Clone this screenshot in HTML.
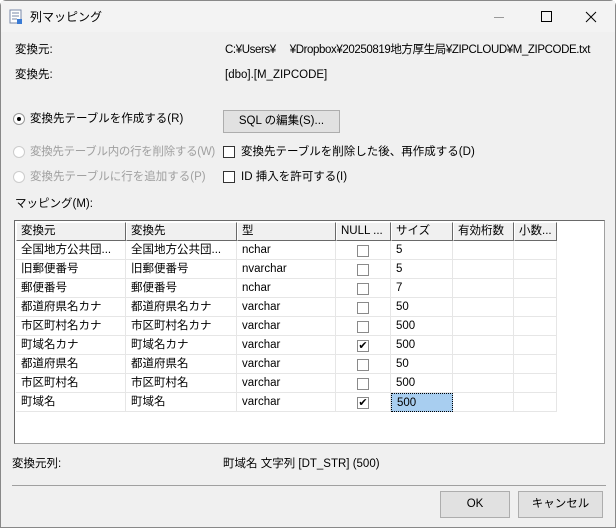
<!DOCTYPE html><html><head><meta charset="utf-8"><style>
*{margin:0;padding:0;box-sizing:border-box}
body{width:616px;height:528px;background:#fff;font-family:"Liberation Sans","Noto Sans CJK JP",sans-serif;font-size:11.5px;color:#000;position:relative;overflow:hidden}
.win{position:absolute;left:0;top:0;width:616px;height:528px;background:#f0f0f0;border:1px solid #888;border-radius:6px 6px 0 0}
.tb{position:absolute;left:0;top:0;width:614px;height:31px;background:#f3f3f3}
.a{position:absolute;white-space:nowrap;line-height:14px}
.g{color:#a0a0a0}
.btn{position:absolute;background:#e1e1e1;border:1px solid #adadad;text-align:center}
.cb{position:absolute;width:12px;height:12px;border:1px solid #333;background:#fff}
.rd{position:absolute;width:12px;height:12px;border-radius:50%;border:1px solid #999;background:#fff}
.grid{position:absolute;left:13px;top:219px;width:591px;height:224px;background:#fff;border:1px solid #a0a0a0;border-top-color:#696969;border-left-color:#696969}
.h{position:absolute;top:1px;height:19px;background:#f0f0f0;border:1px solid;border-color:#fff #696969 #696969 #fff;padding-left:4px;line-height:17px;white-space:nowrap;overflow:hidden}
.c{position:absolute;height:19px;border-right:1px solid #e6e6e6;border-bottom:1px solid #e6e6e6;padding-left:5px;line-height:18px;overflow:hidden;white-space:nowrap}
.ck{position:absolute;width:12px;height:12px;border:1px solid #8a8a8a;background:#fff;font-size:11px;line-height:10px;text-align:center}
</style></head><body><div class="win">
<div class="tb"></div>
<svg style="position:absolute;left:8px;top:8px" width="14" height="16"><rect x="1" y="1" width="11" height="13" fill="#fff" stroke="#7a8aa8"/><path d="M3 4h7M3 7h7M3 10h5" stroke="#7a8aa8"/><rect x="8" y="10" width="5" height="5" fill="#3a7bd5"/></svg>
<div class="a" style="left:29px;top:9px;font-size:12px">列マッピング</div>
<div style="position:absolute;left:493px;top:16px;width:10px;height:1px;background:#999"></div>
<div style="position:absolute;left:540px;top:10px;width:11px;height:11px;border:1px solid #000"></div>
<svg style="position:absolute;left:584px;top:10px" width="12" height="12"><path d="M1 1L11 11M11 1L1 11" stroke="#000" stroke-width="1"/></svg>
<div class="a" style="left:14px;top:42px">変換元:</div>
<div class="a" style="left:224px;top:42px;letter-spacing:-0.4px">C:¥Users¥&nbsp;&nbsp;&nbsp;&nbsp;&nbsp;¥Dropbox¥20250819地方厚生局¥ZIPCLOUD¥M_ZIPCODE.txt</div>
<div class="a" style="left:14px;top:67px">変換先:</div>
<div class="a" style="left:224px;top:67px">[dbo].[M_ZIPCODE]</div>
<div class="rd" style="left:12px;top:112px"><div style="position:absolute;left:3px;top:3px;width:4px;height:4px;border-radius:50%;background:#000"></div></div>
<div class="a" style="left:29px;top:111px">変換先テーブルを作成する(R)</div>
<div class="btn" style="left:222px;top:109px;width:117px;height:23px;line-height:21px">SQL の編集(S)...</div>
<div class="rd" style="left:12px;top:145px;border-color:#ccc"></div>
<div class="a g" style="left:29px;top:144px;letter-spacing:-0.3px">変換先テーブル内の行を削除する(W)</div>
<div class="cb" style="left:222px;top:145px"></div>
<div class="a" style="left:240px;top:144px">変換先テーブルを削除した後、再作成する(D)</div>
<div class="rd" style="left:12px;top:170px;border-color:#ccc"></div>
<div class="a g" style="left:29px;top:169px">変換先テーブルに行を追加する(P)</div>
<div class="cb" style="left:222px;top:170px"></div>
<div class="a" style="left:240px;top:169px">ID 挿入を許可する(I)</div>
<div class="a" style="left:14px;top:196px">マッピング(M):</div>
<div class="grid">
<div class="h" style="left:1px;width:110px">変換元</div>
<div class="h" style="left:111px;width:111px">変換先</div>
<div class="h" style="left:222px;width:99px">型</div>
<div class="h" style="left:321px;width:55px">NULL ...</div>
<div class="h" style="left:376px;width:62px">サイズ</div>
<div class="h" style="left:438px;width:61px">有効桁数</div>
<div class="h" style="left:499px;width:43px">小数...</div>
<div id="rows"></div>
</div>
<div class="a" style="left:11px;top:456px">変換元列:</div>
<div class="a" style="left:222px;top:456px">町域名 文字列 [DT_STR] (500)</div>
<div style="position:absolute;left:11px;top:484px;width:594px;height:1px;background:#a0a0a0"></div>
<div class="btn" style="left:439px;top:490px;width:70px;height:27px;line-height:25px">OK</div>
<div class="btn" style="left:517px;top:490px;width:85px;height:27px;line-height:25px">キャンセル</div>
</div>
<script>
var d=[["全国地方公共団...","全国地方公共団...","nchar",0,"5"],["旧郵便番号","旧郵便番号","nvarchar",0,"5"],["郵便番号","郵便番号","nchar",0,"7"],["都道府県名カナ","都道府県名カナ","varchar",0,"50"],["市区町村名カナ","市区町村名カナ","varchar",0,"500"],["町域名カナ","町域名カナ","varchar",1,"500"],["都道府県名","都道府県名","varchar",0,"50"],["市区町村名","市区町村名","varchar",0,"500"],["町域名","町域名","varchar",1,"500"]];
var h="";var L=[1,111,222,321,376,438,499,542];
d.forEach(function(r,i){var t=20+i*19;
for(var j=0;j<7;j++){var txt=j<3?r[j]:j==4?r[4]:"";var st="left:"+L[j]+"px;top:"+t+"px;width:"+(L[j+1]-L[j])+"px;";
if(i==8&&j==4)st+="background:#a8cef0;border:1px dotted #000;";
h+='<div class="c" style="'+st+'">'+txt+'</div>';}
h+='<div class="ck" style="left:342px;top:'+(t+4)+'px">'+(r[3]?'✔':'')+'</div>';});
document.getElementById("rows").innerHTML=h;
</script>
</body></html>
